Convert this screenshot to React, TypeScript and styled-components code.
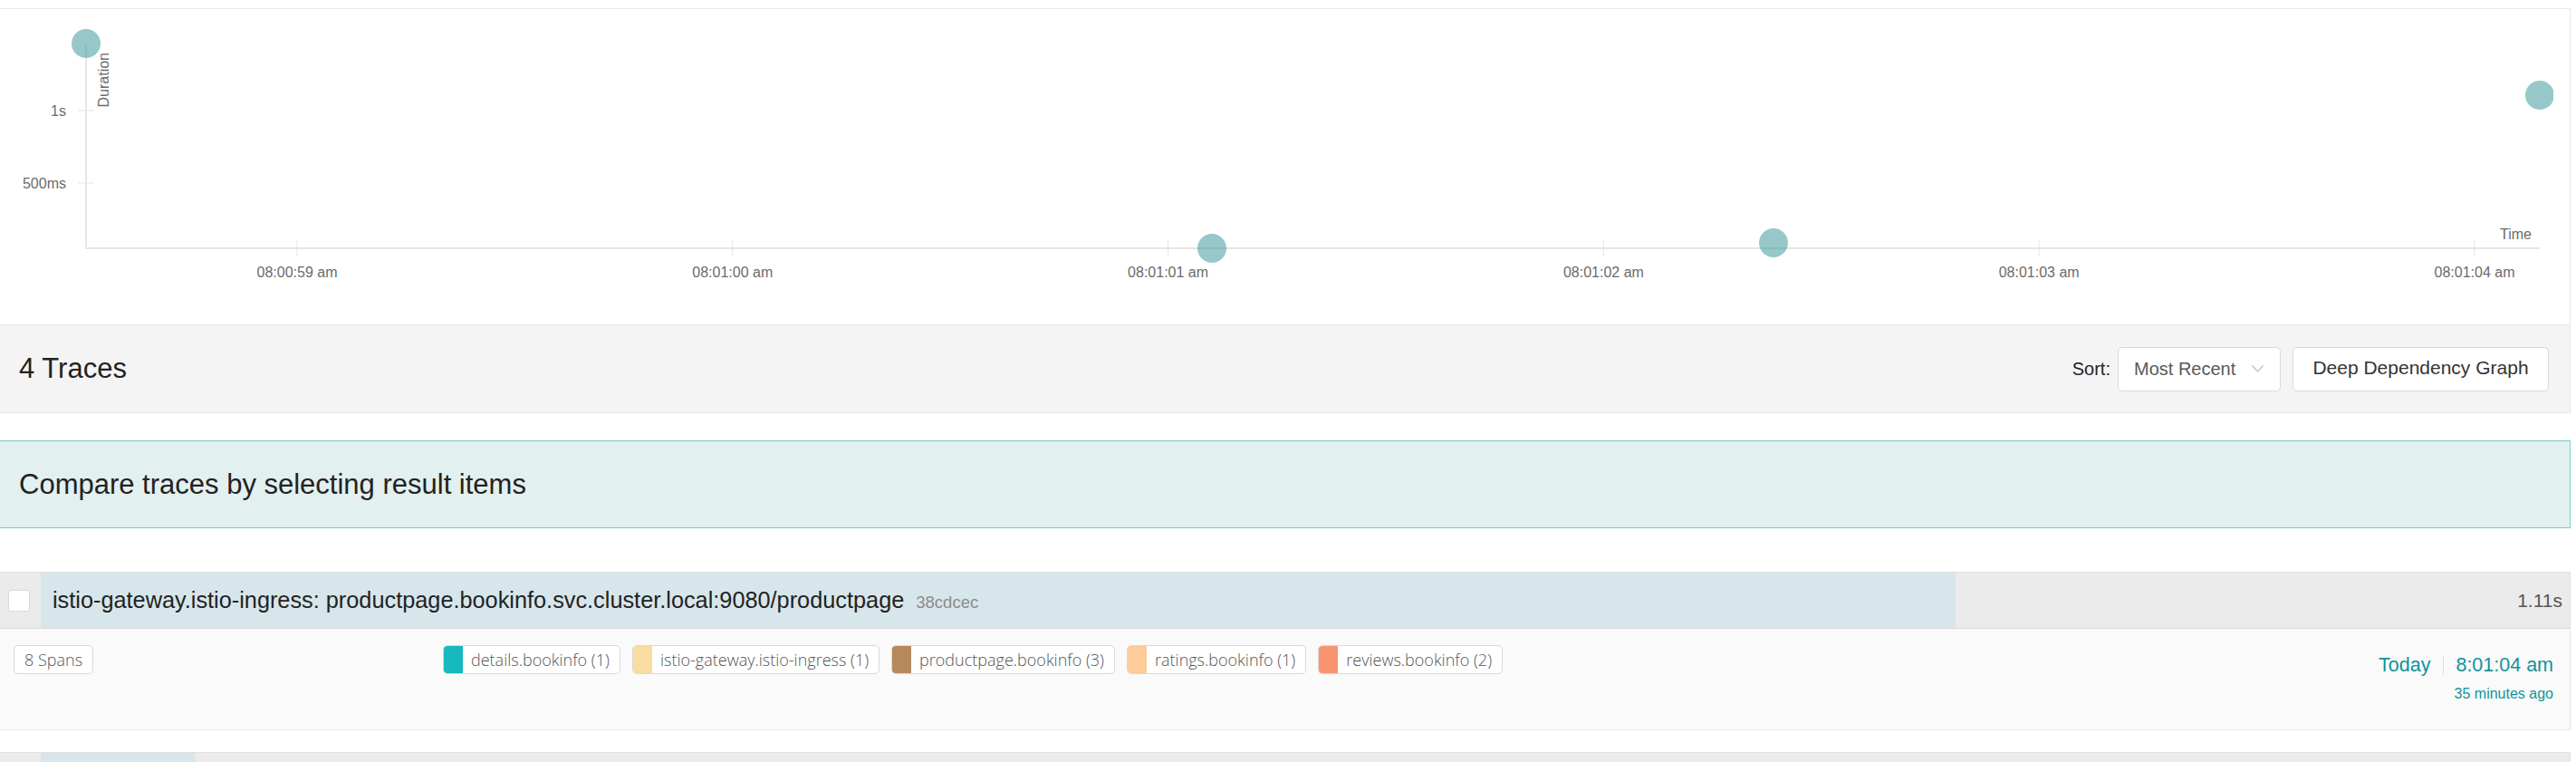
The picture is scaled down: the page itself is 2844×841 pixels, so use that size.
import React from "react";
import styled, { createGlobalStyle } from "styled-components";

const GlobalStyle = createGlobalStyle`
  html, body { margin: 0; padding: 0; background: #fff; overflow: hidden; }
  body { font-family: "Liberation Sans", Arial, Helvetica, sans-serif; color: #222; }
  * { box-sizing: border-box; }
`;

const Page = styled.div`
  width: 2839px;
  margin-left: -1px;
  padding-top: 9px;
  display: flex;
  flex-direction: column;
`;

const ChartBox = styled.div`
  height: 349px;
  border: 1px solid #e6e6e6;
  border-bottom: none;
  background: #fff;
  overflow: hidden;
`;

const ResultsHeader = styled.div`
  height: 98px;
  border: 1px solid #e6e6e6;
  background: #f4f4f4;
  display: flex;
  align-items: center;
  justify-content: space-between;
  padding: 0 23px 0 21px;
`;

const HeaderTitle = styled.div`
  font-size: 31px;
  color: #222;
`;

const HeaderActions = styled.div`
  display: flex;
  align-items: center;
`;

const SortLabel = styled.span`
  font-size: 20px;
  color: #222;
  margin-right: 8px;
`;

const Select = styled.div`
  width: 180px;
  height: 49px;
  border: 1px solid #d9d9d9;
  border-radius: 5px;
  background: #fff;
  display: flex;
  align-items: center;
  justify-content: space-between;
  padding: 0 18px 0 17px;
  font-size: 20px;
  color: #595959;
  margin-right: 13px;
`;

const Button = styled.div`
  width: 283px;
  height: 49px;
  border: 1px solid #d9d9d9;
  border-radius: 5px;
  background: #fff;
  display: flex;
  align-items: center;
  justify-content: center;
  font-size: 21px;
  color: #333;
  padding-bottom: 3px;
`;

const Banner = styled.div`
  margin-top: 30px;
  height: 97px;
  border: 1px solid #82c8c6;
  background: #e3f0f0;
  display: flex;
  align-items: center;
  padding-left: 21px;
  font-size: 31px;
  color: #222;
`;

const TraceList = styled.div`
  margin-top: 48px;
  display: flex;
  flex-direction: column;
  gap: 24px;
`;

const TraceItem = styled.div`
  display: flex;
  flex-direction: column;
`;

const TitleBar = styled.div`
  height: 63px;
  display: flex;
  border: 1px solid #e0e0e0;
  border-bottom-color: #d8d8d8;
  background: #ebebeb;
`;

const SelectCell = styled.div`
  width: 45px;
  padding-left: 9px;
  display: flex;
  align-items: center;
  background: #ebebeb;
`;

const Checkbox = styled.span`
  width: 24px;
  height: 24px;
  background: #fff;
  border: 1px solid #d9d9d9;
  border-radius: 3px;
`;

const DurationArea = styled.div`
  position: relative;
  flex: 1;
  display: flex;
  align-items: center;
  justify-content: space-between;
  padding: 0 8px 0 13px;
`;

const DurationFill = styled.div`
  position: absolute;
  left: 0;
  top: 0;
  bottom: 0;
  background: #d7e6eb;
`;

const TraceName = styled.div`
  position: relative;
  display: flex;
  align-items: baseline;
  gap: 13px;
  font-size: 25.3px;
  color: #222;
  white-space: nowrap;
`;

const TraceId = styled.span`
  font-size: 18.5px;
  color: #8c8c8c;
`;

const Duration = styled.span`
  position: relative;
  font-size: 21px;
  color: #555;
`;

const Details = styled.div`
  height: 112px;
  border: 1px solid #e6e6e6;
  border-top: none;
  background: #fafafa;
  display: flex;
  padding: 18px 18px 0 15px;
`;

const SpanCol = styled.div`
  width: 474px;
`;

const Pill = styled.span`
  display: inline-flex;
  align-items: center;
  height: 32px;
  border: 1px solid #d9d9d9;
  border-radius: 5px;
  background: #fff;
  font-family: "Open Sans", "Liberation Sans", sans-serif;
  font-weight: 300;
  font-size: 18px;
  color: #555;
  overflow: hidden;
  white-space: nowrap;
`;

const CountPill = styled(Pill)`
  padding: 0 11px;
`;

const ServiceList = styled.div`
  flex: 1;
  display: flex;
  gap: 13px;
  align-items: flex-start;
`;

const ServiceSwatch = styled.span<{ $color: string }>`
  align-self: stretch;
  width: 22px;
  margin: -1px 0 -1px -1px;
  background: ${(p) => p.$color};
`;

const ServiceLabel = styled.span`
  padding: 0 11px 0 9px;
`;

const TimeCol = styled.div`
  display: flex;
  flex-direction: column;
  align-items: flex-end;
  padding-top: 10px;
  color: #11939a;
`;

const TimeLine = styled.div`
  display: flex;
  align-items: center;
  font-size: 21.5px;
`;

const Divider = styled.span`
  width: 1px;
  height: 20px;
  background: #ddd;
  margin: 0 13px 0 14px;
`;

const Ago = styled.div`
  font-size: 16px;
  margin-top: 10px;
`;

const AXIS = "#e6e6e6";
const LABEL = "#6b6b6b";

const xTicks = [
  "08:00:59 am",
  "08:01:00 am",
  "08:01:01 am",
  "08:01:02 am",
  "08:01:03 am",
  "08:01:04 am",
];

const dots = [
  { x: 95, y: 48 },
  { x: 1338, y: 274 },
  { x: 1958, y: 268 },
  { x: 2804, y: 105 },
];

function ScatterChart() {
  const oy = -10;
  return (
    <svg width={2819} height={348} viewBox={`0 ${-oy} 2819 348`} style={{ display: "block" }}>
      <g fontFamily="Liberation Sans, Arial, sans-serif" fontSize={16} fill={LABEL}>
        <line x1={95} y1={49} x2={95} y2={275} stroke={AXIS} strokeWidth={2} />
        <line x1={94} y1={274} x2={2804} y2={274} stroke={AXIS} strokeWidth={2} />
        <line x1={86} y1={122} x2={104} y2={122} stroke={AXIS} strokeWidth={1} />
        <line x1={86} y1={202} x2={104} y2={202} stroke={AXIS} strokeWidth={1} />
        <text x={73} y={128} textAnchor="end">1s</text>
        <text x={73} y={208} textAnchor="end">500ms</text>
        <text x={120} y={58} textAnchor="end" transform="rotate(-90 120 58)">
          Duration
        </text>
        {xTicks.map((t, i) => {
          const x = 328 + i * 480.8;
          return (
            <g key={t}>
              <line x1={x} y1={265} x2={x} y2={283} stroke={AXIS} strokeWidth={1} />
              <text x={x} y={306} textAnchor="middle">{t}</text>
            </g>
          );
        })}
        <text x={2795} y={264} textAnchor="end">Time</text>
        {dots.map((d, i) => (
          <circle key={i} cx={d.x} cy={d.y} r={16} fill="#2d9195" fillOpacity={0.5} />
        ))}
      </g>
    </svg>
  );
}

type Service = { name: string; count: number; color: string };

const services: Service[] = [
  { name: "details.bookinfo", count: 1, color: "#17b8be" },
  { name: "istio-gateway.istio-ingress", count: 1, color: "#f8dca1" },
  { name: "productpage.bookinfo", count: 3, color: "#b7885e" },
  { name: "ratings.bookinfo", count: 1, color: "#ffcb99" },
  { name: "reviews.bookinfo", count: 2, color: "#f89570" },
];

type Trace = {
  name: string;
  id: string;
  duration: string;
  percent: number;
  spans: number;
  services: Service[];
  day: string;
  time: string;
  ago: string;
};

const traces: Trace[] = [
  {
    name: "istio-gateway.istio-ingress: productpage.bookinfo.svc.cluster.local:9080/productpage",
    id: "38cdcec",
    duration: "1.11s",
    percent: 75.7,
    spans: 8,
    services,
    day: "Today",
    time: "8:01:04 am",
    ago: "35 minutes ago",
  },
  {
    name: "istio-gateway.istio-ingress: productpage.bookinfo.svc.cluster.local:9080/productpage",
    id: "a1f03b2",
    duration: "91.2ms",
    percent: 6.1,
    spans: 8,
    services,
    day: "Today",
    time: "8:01:03 am",
    ago: "35 minutes ago",
  },
];

function TraceRow({ t }: { t: Trace }) {
  return (
    <TraceItem>
      <TitleBar>
        <SelectCell>
          <Checkbox />
        </SelectCell>
        <DurationArea>
          <DurationFill style={{ width: `${t.percent}%` }} />
          <TraceName>
            {t.name}
            <TraceId>{t.id}</TraceId>
          </TraceName>
          <Duration>{t.duration}</Duration>
        </DurationArea>
      </TitleBar>
      <Details>
        <SpanCol>
          <CountPill>{t.spans} Spans</CountPill>
        </SpanCol>
        <ServiceList>
          {t.services.map((s) => (
            <Pill key={s.name}>
              <ServiceSwatch $color={s.color} />
              <ServiceLabel>
                {s.name} ({s.count})
              </ServiceLabel>
            </Pill>
          ))}
        </ServiceList>
        <TimeCol>
          <TimeLine>
            {t.day}
            <Divider />
            {t.time}
          </TimeLine>
          <Ago>{t.ago}</Ago>
        </TimeCol>
      </Details>
    </TraceItem>
  );
}

export default function App() {
  return (
    <>
      <GlobalStyle />
      <Page>
        <ChartBox>
          <ScatterChart />
        </ChartBox>
        <ResultsHeader>
          <HeaderTitle>4 Traces</HeaderTitle>
          <HeaderActions>
            <SortLabel>Sort:</SortLabel>
            <Select>
              Most Recent
              <svg width="13" height="8" viewBox="0 0 13 8">
                <polyline points="0.5,0.5 6.5,7 12.5,0.5" fill="none" stroke="#bfbfbf" strokeWidth="1.2" />
              </svg>
            </Select>
            <Button>Deep Dependency Graph</Button>
          </HeaderActions>
        </ResultsHeader>
        <Banner>Compare traces by selecting result items</Banner>
        <TraceList>
          {traces.map((t) => (
            <TraceRow key={t.id} t={t} />
          ))}
        </TraceList>
      </Page>
    </>
  );
}
